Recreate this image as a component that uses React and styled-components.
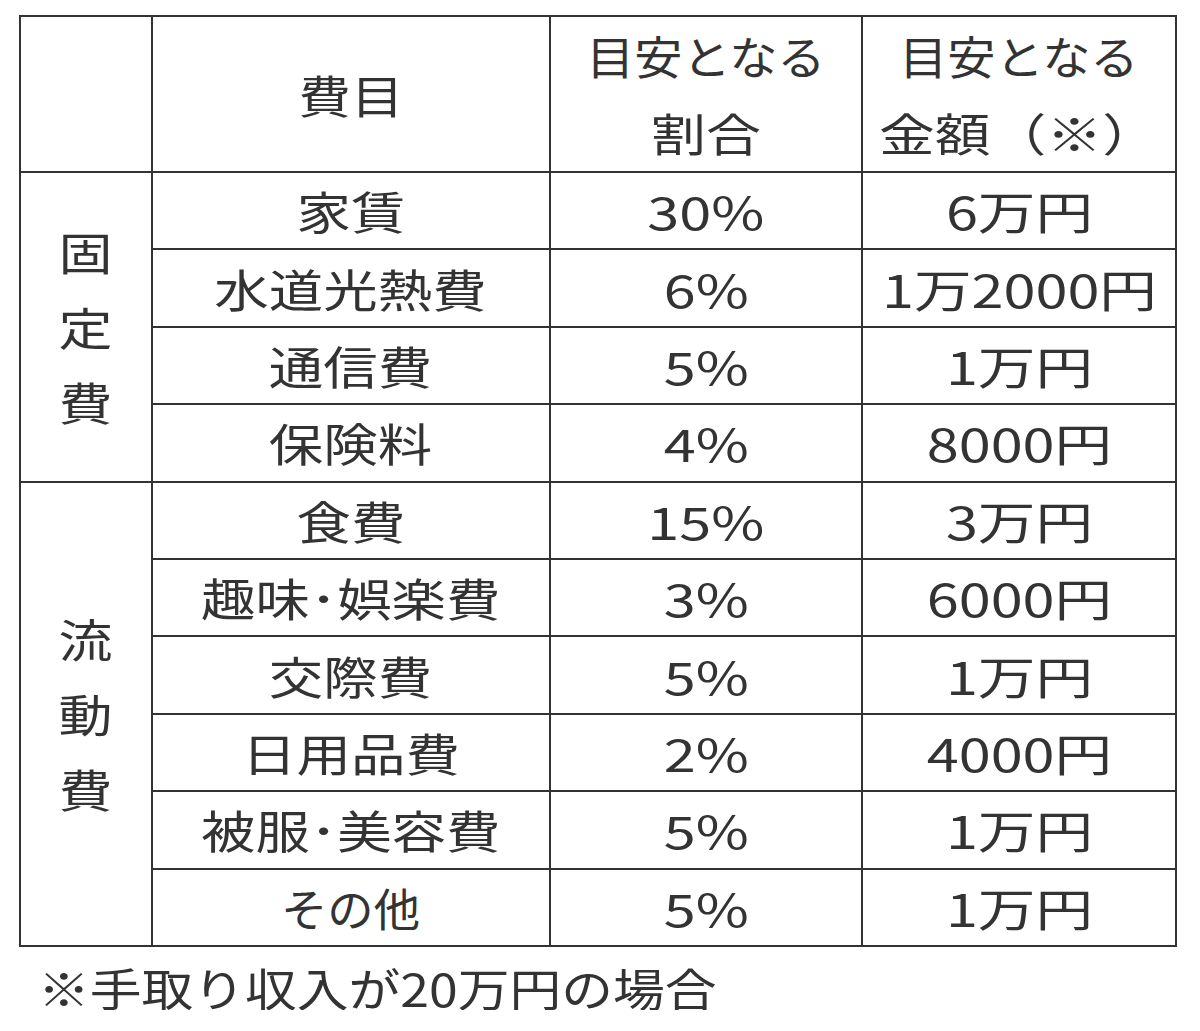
import React from "react";
import styled, { createGlobalStyle } from "styled-components";

const Global = createGlobalStyle`
  html, body { margin: 0; padding: 0; background: #ffffff; }
  body { font-family: "Noto Sans CJK JP", "Noto Sans", sans-serif; color: #333333; }
`;

const Page = styled.div`
  padding: 15px 0 0 19px;
  width: 1200px;
  box-sizing: border-box;
`;

const Table = styled.table`
  border-collapse: collapse;
  table-layout: fixed;
  width: 1156px;
  font-size: 45px;
  font-weight: 400;
  line-height: 1;
`;

const Cell = styled.td`
  border: 2px solid #333;
  text-align: center;
  vertical-align: middle;
  padding: 0;
  height: ${(p) => p.$h || 75.4}px;
  white-space: nowrap;
`;

const Text = styled.span`
  display: inline-block;
  transform: scaleX(${(p) => p.$sx || 1.22});
  transform-origin: center;
`;

const HeadLine = styled.div`
  line-height: 77px;
`;

const Vertical = styled.div`
  display: flex;
  flex-direction: column;
  align-items: center;
  line-height: 75px;
`;

const Note = styled.div`
  font-size: 45px;
  line-height: 1;
  padding: 18px 0 0 19px;
  color: #333333;
`;

const NoteText = styled.span`
  display: inline-block;
  transform: scaleX(1.15);
  transform-origin: left center;
`;

const groups = [
  {
    label: "固定費",
    rows: [
      ["家賃", "30%", "6万円"],
      ["水道光熱費", "6%", "1万2000円"],
      ["通信費", "5%", "1万円"],
      ["保険料", "4%", "8000円"],
    ],
  },
  {
    label: "流動費",
    rows: [
      ["食費", "15%", "3万円"],
      ["趣味･娯楽費", "3%", "6000円"],
      ["交際費", "5%", "1万円"],
      ["日用品費", "2%", "4000円"],
      ["被服･美容費", "5%", "1万円"],
      ["その他", "5%", "1万円", 1.03],
    ],
  },
];

export default function App() {
  return (
    <Page>
      <Global />
      <Table>
        <colgroup>
          <col style={{ width: 132 }} />
          <col style={{ width: 398 }} />
          <col style={{ width: 312 }} />
          <col style={{ width: 314 }} />
        </colgroup>
        <tbody>
          <tr>
            <Cell $h={151}></Cell>
            <Cell $h={151}>
              <Text $sx={1.17}>費目</Text>
            </Cell>
            <Cell $h={151}>
              <HeadLine>
                <Text $sx={1.07}>目安となる</Text>
              </HeadLine>
              <HeadLine>
                <Text $sx={1.22}>割合</Text>
              </HeadLine>
            </Cell>
            <Cell $h={151}>
              <HeadLine>
                <Text $sx={1.07}>目安となる</Text>
              </HeadLine>
              <HeadLine>
                <Text $sx={1.24}>金額（※）</Text>
              </HeadLine>
            </Cell>
          </tr>
          {groups.map((g) =>
            g.rows.map((r, i) => (
              <tr key={g.label + r[0]}>
                {i === 0 && (
                  <Cell rowSpan={g.rows.length}>
                    <Vertical>
                      {g.label.split("").map((c, k) => (
                        <Text key={k} $sx={1.2}>
                          {c}
                        </Text>
                      ))}
                    </Vertical>
                  </Cell>
                )}
                <Cell>
                  <Text $sx={r[3] || 1.21}>{r[0]}</Text>
                </Cell>
                <Cell>
                  <Text $sx={1.28}>{r[1]}</Text>
                </Cell>
                <Cell>
                  <Text $sx={1.28}>{r[2]}</Text>
                </Cell>
              </tr>
            ))
          )}
        </tbody>
      </Table>
      <Note>
        <NoteText>※手取り収入が20万円の場合</NoteText>
      </Note>
    </Page>
  );
}
